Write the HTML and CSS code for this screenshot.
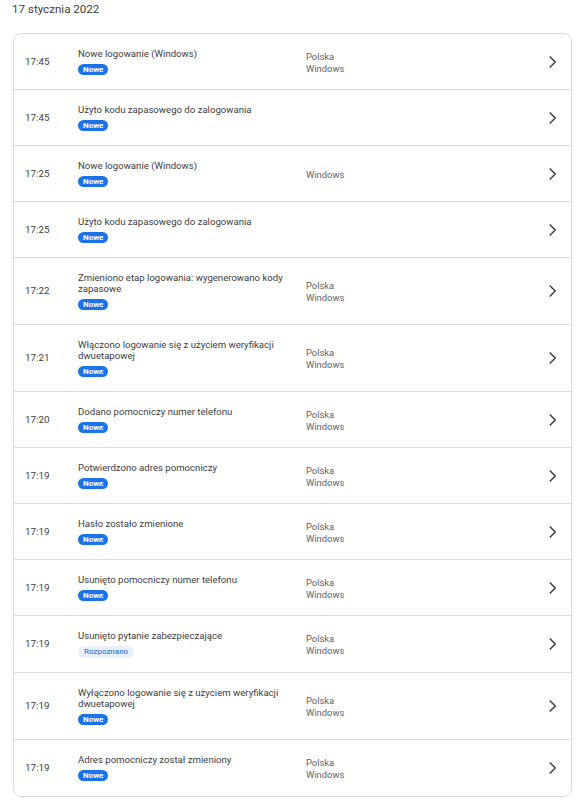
FILE: index.html
```html
<!DOCTYPE html>
<html lang="pl">
<head>
<meta charset="utf-8">
<link rel="stylesheet" href="styles.css">
</head>
<body>
<div class="page">
  <h2 class="date">17 stycznia 2022</h2>
  <div class="card">
    <div class="row">
      <div class="time">17:45</div>
      <div class="event"><div class="title">Nowe logowanie (Windows)</div><span class="badge">Nowe</span></div>
      <div class="loc">Polska<br>Windows</div>
      <svg class="chev" viewBox="0 0 24 24"><polyline points="9.5,6 15.5,12 9.5,18"/></svg>
    </div>
    <div class="row">
      <div class="time">17:45</div>
      <div class="event"><div class="title">Użyto kodu zapasowego do zalogowania</div><span class="badge">Nowe</span></div>
      <div class="loc"></div>
      <svg class="chev" viewBox="0 0 24 24"><polyline points="9.5,6 15.5,12 9.5,18"/></svg>
    </div>
    <div class="row">
      <div class="time">17:25</div>
      <div class="event"><div class="title">Nowe logowanie (Windows)</div><span class="badge">Nowe</span></div>
      <div class="loc">Windows</div>
      <svg class="chev" viewBox="0 0 24 24"><polyline points="9.5,6 15.5,12 9.5,18"/></svg>
    </div>
    <div class="row">
      <div class="time">17:25</div>
      <div class="event"><div class="title">Użyto kodu zapasowego do zalogowania</div><span class="badge">Nowe</span></div>
      <div class="loc"></div>
      <svg class="chev" viewBox="0 0 24 24"><polyline points="9.5,6 15.5,12 9.5,18"/></svg>
    </div>
    <div class="row">
      <div class="time">17:22</div>
      <div class="event"><div class="title">Zmieniono etap logowania: wygenerowano kody zapasowe</div><span class="badge">Nowe</span></div>
      <div class="loc">Polska<br>Windows</div>
      <svg class="chev" viewBox="0 0 24 24"><polyline points="9.5,6 15.5,12 9.5,18"/></svg>
    </div>
    <div class="row">
      <div class="time">17:21</div>
      <div class="event"><div class="title">Włączono logowanie się z użyciem weryfikacji dwuetapowej</div><span class="badge">Nowe</span></div>
      <div class="loc">Polska<br>Windows</div>
      <svg class="chev" viewBox="0 0 24 24"><polyline points="9.5,6 15.5,12 9.5,18"/></svg>
    </div>
    <div class="row">
      <div class="time">17:20</div>
      <div class="event"><div class="title">Dodano pomocniczy numer telefonu</div><span class="badge">Nowe</span></div>
      <div class="loc">Polska<br>Windows</div>
      <svg class="chev" viewBox="0 0 24 24"><polyline points="9.5,6 15.5,12 9.5,18"/></svg>
    </div>
    <div class="row">
      <div class="time">17:19</div>
      <div class="event"><div class="title">Potwierdzono adres pomocniczy</div><span class="badge">Nowe</span></div>
      <div class="loc">Polska<br>Windows</div>
      <svg class="chev" viewBox="0 0 24 24"><polyline points="9.5,6 15.5,12 9.5,18"/></svg>
    </div>
    <div class="row">
      <div class="time">17:19</div>
      <div class="event"><div class="title">Hasło zostało zmienione</div><span class="badge">Nowe</span></div>
      <div class="loc">Polska<br>Windows</div>
      <svg class="chev" viewBox="0 0 24 24"><polyline points="9.5,6 15.5,12 9.5,18"/></svg>
    </div>
    <div class="row">
      <div class="time">17:19</div>
      <div class="event"><div class="title">Usunięto pomocniczy numer telefonu</div><span class="badge">Nowe</span></div>
      <div class="loc">Polska<br>Windows</div>
      <svg class="chev" viewBox="0 0 24 24"><polyline points="9.5,6 15.5,12 9.5,18"/></svg>
    </div>
    <div class="row">
      <div class="time">17:19</div>
      <div class="event"><div class="title">Usunięto pytanie zabezpieczające</div><span class="badge light">Rozpoznano</span></div>
      <div class="loc">Polska<br>Windows</div>
      <svg class="chev" viewBox="0 0 24 24"><polyline points="9.5,6 15.5,12 9.5,18"/></svg>
    </div>
    <div class="row">
      <div class="time">17:19</div>
      <div class="event"><div class="title">Wyłączono logowanie się z użyciem weryfikacji dwuetapowej</div><span class="badge">Nowe</span></div>
      <div class="loc">Polska<br>Windows</div>
      <svg class="chev" viewBox="0 0 24 24"><polyline points="9.5,6 15.5,12 9.5,18"/></svg>
    </div>
    <div class="row">
      <div class="time">17:19</div>
      <div class="event"><div class="title">Adres pomocniczy został zmieniony</div><span class="badge">Nowe</span></div>
      <div class="loc">Polska<br>Windows</div>
      <svg class="chev" viewBox="0 0 24 24"><polyline points="9.5,6 15.5,12 9.5,18"/></svg>
    </div>
  </div>
</div>
</body>
</html>
```
FILE: styles.css
```css
html, body {
  margin: 0;
  padding: 0;
  background: #fff;
}
body {
  font-family: Roboto, "Liberation Sans", Arial, sans-serif;
  color: #3c4043;
}
.page {
  padding: 0 8px 0 13px;
}
.date {
  margin: 0 0 0 -1px;
  padding: 2px 0 0 0;
  font-size: 11.6px;
  font-weight: 400;
  line-height: 15px;
  color: #3c4043;
  height: 31px;
}
.card {
  border: 1px solid #dadce0;
  border-radius: 8px;
  overflow: hidden;
}
.row {
  display: grid;
  grid-template-columns: 53px 228px 1fr 22px;
  align-items: center;
  padding: 14px 8px 14px 11px;
  border-top: 1px solid #dadce0;
}
.row:first-child {
  border-top: none;
}
.row:last-child {
  padding-bottom: 15px;
}
.time {
  font-size: 9.8px;
  line-height: 12px;
  color: #3c4043;
}
.event {
  display: flex;
  flex-direction: column;
  align-items: flex-start;
  padding-right: 10px;
}
.title {
  font-size: 9.6px;
  line-height: 11px;
  color: #3c4043;
}
.badge {
  margin-top: 5px;
  height: 11px;
  line-height: 11px;
  padding: 0 5px;
  border-radius: 6px;
  background: #1a73e8;
  color: #fff;
  font-size: 8px;
  font-weight: 700;
}
.badge.light {
  height: 12px;
  line-height: 12px;
  background: #e8f0fe;
  color: #1967d2;
  font-weight: 400;
  padding: 0 6px;
}
.loc {
  font-size: 9.4px;
  line-height: 12px;
  color: #5f6368;
  padding-top: 2px;
}
.chev {
  width: 22px;
  height: 22px;
  fill: none;
  stroke: #3c4043;
  stroke-width: 1.6;
}
```
